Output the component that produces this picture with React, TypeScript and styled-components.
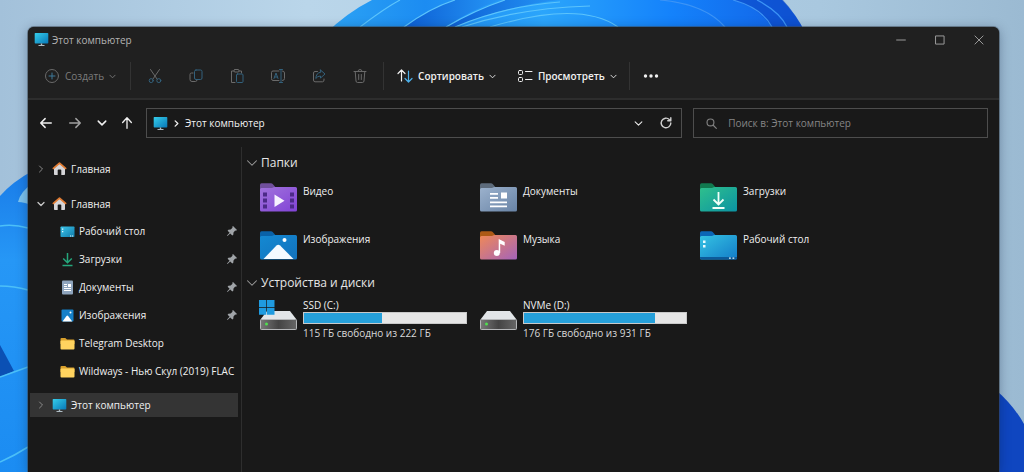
import React from "react";
import styled, { createGlobalStyle } from "styled-components";

const GlobalStyle = createGlobalStyle`
  *, *::before, *::after { box-sizing: border-box; }
  body {
    margin: 0;
    background: #a3c1da;
    color: #f0f0f0;
    font: 400 10px/16px "Open Sans", "Noto Sans", sans-serif;
  }
  button, input { font: inherit; color: inherit; }
  ul { list-style: none; margin: 0; padding: 0; }
  svg { flex: none; }
`;

/* ---------- shell ---------- */

const Desktop = styled.div`
  position: relative;
  display: flex;
  min-height: 100vh;
  padding: 27px 25px 0 28px;
  overflow: hidden;
`;

const WallpaperArt = styled.svg`
  position: absolute;
  inset: 0;
  width: 100%;
  height: 100%;
`;

const ExplorerWindow = styled.main`
  position: relative;
  flex: 1;
  min-width: 0;
  display: flex;
  flex-direction: column;
  background: #191919;
  border-radius: 6px 6px 0 0;
  box-shadow: 0 0 0 1px rgba(60, 70, 80, 0.5), 0 2px 12px rgba(0, 20, 50, 0.35);
`;

const TitleBar = styled.header`
  display: flex;
  align-items: center;
  height: 25px;
  padding-left: 6px;
  background: #202020;
  border-radius: 6px 6px 0 0;
`;

const Title = styled.h1`
  flex: 1;
  margin: 0 0 0 3px;
  font-size: 10px;
  font-weight: 400;
  color: #b4b4b4;
`;

const IconButton = styled.button<{ $w: number }>`
  display: flex;
  align-items: center;
  justify-content: center;
  flex: none;
  width: ${(p) => p.$w}px;
  height: 24px;
  padding: 0;
  border: 0;
  background: none;
  color: #f0f0f0;
`;

/* ---------- command bar ---------- */

const CommandBar = styled.div`
  display: flex;
  align-items: center;
  height: 48px;
  padding: 2px 0 0 16px;
  background: #202020;
  border-bottom: 2px solid #2d2d2d;
`;

const Command = styled.button<{ $muted?: boolean }>`
  display: flex;
  align-items: center;
  gap: 5px;
  flex: none;
  padding: 0;
  border: 0;
  background: none;
  white-space: nowrap;
  font-weight: ${(p) => (p.$muted ? 500 : 600)};
  color: ${(p) => (p.$muted ? "#7c7c7c" : "#f0f0f0")};
`;

const CommandGroup = styled.div<{ $gap?: number }>`
  display: flex;
  align-items: center;
  gap: ${(p) => p.$gap ?? 0}px;
`;

const Separator = styled.span<{ $left: number; $right: number }>`
  flex: none;
  width: 1px;
  height: 28px;
  margin: 0 ${(p) => p.$right}px 0 ${(p) => p.$left}px;
  background: #333333;
`;

/* ---------- address row ---------- */

const AddressRow = styled.div`
  display: flex;
  align-items: center;
  padding: 8px 11px 9px 4px;
`;

const Fields = styled.div`
  flex: 1;
  min-width: 0;
  display: grid;
  grid-template-columns: minmax(0, 20fr) minmax(0, 11fr);
  gap: 11px;
  margin-left: 6px;
`;

const AddressBox = styled.nav`
  display: flex;
  align-items: center;
  height: 30px;
  padding: 0 1px 0 6px;
  border: 1px solid #4d4d4d;
`;

const Crumb = styled.a`
  flex: 1;
  color: #f2f2f2;
  font-weight: 500;
  text-decoration: none;
  white-space: nowrap;
`;

const SearchBox = styled.label`
  display: flex;
  align-items: center;
  gap: 11px;
  height: 30px;
  padding: 0 12px;
  border: 1px solid #4d4d4d;
  color: #808080;
`;

const SearchInput = styled.input`
  flex: 1;
  min-width: 0;
  padding: 0;
  border: 0;
  outline: 0;
  background: none;
  &::placeholder { color: #858585; opacity: 1; }
`;

/* ---------- body ---------- */

const Body = styled.div`
  flex: 1;
  display: grid;
  grid-template-columns: 214px minmax(0, 1fr);
`;

const Sidebar = styled.nav`
  padding: 8px 3px 0 2px;
  border-right: 1px solid #2e2e2e;
`;

const SideGroup = styled.ul`
  margin-bottom: 8px;
`;

const SideRow = styled.li<{ $selected?: boolean; $nested?: boolean }>`
  display: flex;
  align-items: center;
  height: ${(p) => (p.$selected ? 24 : p.$nested ? 28 : 27)}px;
  padding-left: ${(p) => (p.$nested ? 30 : 0)}px;
  padding-right: 1px;
  background: ${(p) => (p.$selected ? "#343434" : "transparent")};
`;

const SideLink = styled.a`
  flex: 1;
  min-width: 0;
  display: flex;
  align-items: center;
  gap: 4px;
  color: #f0f0f0;
  text-decoration: none;
  white-space: nowrap;
`;

const Content = styled.section`
  padding: 6px 4px 0;
`;

const SectionHeading = styled.h2`
  display: flex;
  align-items: center;
  gap: 3px;
  margin: 0;
  height: 20px;
  font-size: 12px;
  line-height: 20px;
  font-weight: 400;
  color: #e6e6e6;
`;

const TileGrid = styled.ul<{ $top: number }>`
  display: grid;
  grid-template-columns: repeat(auto-fill, minmax(200px, 220px));
  row-gap: 18px;
  padding: ${(p) => p.$top}px 0 12px 14px;
`;

const FolderTile = styled.a`
  display: flex;
  gap: 6px;
  height: 30px;
  color: #f0f0f0;
  text-decoration: none;
`;

const DriveTile = styled(FolderTile)`
  height: 42px;
`;

const DriveInfo = styled.div`
  width: 164px;
`;

const DriveLine = styled.div<{ $dim?: boolean }>`
  height: ${(p) => (p.$dim ? 16 : 15)}px;
  color: ${(p) => (p.$dim ? "#d8d8d8" : "#f0f0f0")};
`;

const UsageTrack = styled.div`
  height: 12px;
  margin-bottom: 1px;
  border: 1px solid #c9c9c9;
  background: #e6e6e6;
`;

const UsageFill = styled.div`
  height: 100%;
  background: #26a0da;
`;

/* ---------- small line icons ---------- */

type LineProps = { size?: number; color?: string; w?: number; children: React.ReactNode };
const Line = ({ size = 16, color = "currentColor", w = 1, children }: LineProps) => (
  <svg width={size} height={size} viewBox="0 0 16 16" fill="none" stroke={color} strokeWidth={w}
    strokeLinecap="round" strokeLinejoin="round" aria-hidden="true">
    {children}
  </svg>
);

const GREY = "#6a6a6a";
const BLUE = "#33617c";

const Chevron = ({ dir = "down", size = 8, w = 2, color }: { dir?: "down" | "right"; size?: number; w?: number; color?: string }) => (
  <Line size={size} w={w} color={color}>
    {dir === "down" ? <path d="M2 5l6 6 6-6" /> : <path d="M5 2l6 6-6 6" />}
  </Line>
);

const PlusIcon = () => (
  <Line color={GREY}><circle cx="8" cy="8" r="6.5" /><path d="M8 5v6M5 8h6" stroke="#3f7898" /></Line>
);
const CutIcon = () => (
  <Line color={GREY}>
    <path d="M3.5 1.5l6.6 9.6M12.5 1.5L5.9 11.1" />
    <circle cx="4.2" cy="12.6" r="2" stroke={BLUE} /><circle cx="11.8" cy="12.6" r="2" stroke={BLUE} />
  </Line>
);
const CopyIcon = () => (
  <Line color={GREY}>
    <path d="M5 5H3.5Q2 5 2 6.5v5Q2 13.5 4 13.5h3.5Q9 13.5 9 12" />
    <rect x="6.5" y="2" width="7.5" height="9.5" rx="1.5" stroke={BLUE} />
  </Line>
);
const PasteIcon = () => (
  <Line color={GREY}>
    <path d="M5 3H2.5v11.5H6M10 3h2.5v2" /><rect x="5" y="1.5" width="5" height="2.5" rx="1" />
    <rect x="7.5" y="6" width="6.5" height="8.5" rx="1" stroke={BLUE} />
  </Line>
);
const RenameIcon = () => (
  <Line color={GREY}>
    <path d="M9 3H3Q1.5 3 1.5 4.5v6Q1.5 12.500 3 12.500h6M12.500 3q2 0 2 2v5.500q0 2-2 2" />
    <path d="M4 10.500L6 5l2 5.500M4.700 9h2.600" stroke={BLUE} /><path d="M9.500 1.500h3M11 1.500v13M9.500 14.500h3" stroke={BLUE} />
  </Line>
);
const ShareIcon = () => (
  <Line color={GREY}>
    <path d="M6.500 3.500H4Q2.500 3.500 2.500 5v7q0 1.800 1.500 1.800h7.500q1.500 0 1.500-1.800v-1" />
    <path d="M9.500 2l4.500 4-4.500 4V8Q6.500 8 4.800 10.500 5 5 9.500 4.200z" stroke={BLUE} />
  </Line>
);
const TrashIcon = () => (
  <Line color={GREY}><path d="M2 3.500h12M6 3.500q0-2 2-2t2 2M3.200 3.500l.8 9.500q.2 1.500 1.500 1.500h5q1.300 0 1.500-1.500l.8-9.500M6.700 6.500v5M9.300 6.500v5" /></Line>
);
const SortIcon = () => (
  <Line w={1.2}><path d="M4.500 13V2M1 5.500L4.500 2 8 5.500" /><path d="M11.500 3v11M8 10.500l3.500 3.500 3.500-3.500" stroke="#4cb0ea" /></Line>
);
const ViewIcon = () => (
  <Line><rect x="1.500" y="2.500" width="4" height="4" rx="1" /><rect x="1.500" y="9.500" width="4" height="4" rx="1" /><path d="M8.500 3.500H15M8.500 11.500H15" /></Line>
);
const MoreIcon = () => (
  <svg width="16" height="16" viewBox="0 0 16 16" fill="currentColor" aria-hidden="true">
    <circle cx="2.500" cy="8" r="1.700" /><circle cx="8" cy="8" r="1.700" /><circle cx="13.500" cy="8" r="1.700" />
  </svg>
);

const PinIcon = () => (
  <svg width="10" height="10" viewBox="0 0 10 10" aria-hidden="true">
    <path d="M6 0l4 4-1 .7-.8-.1-1.700 1.900-.2 2.300-1 .7L3.200 7.400.5 10 0 9.500l2.600-2.700L.6 4.700l.8-1 2.300-.2L5.500 1.800 5.300.8z" fill="#a0a4a8" />
  </svg>
);

/* ---------- coloured icons ---------- */

const Gradient = ({ id, from, to }: { id: string; from: string; to: string }) => (
  <linearGradient id={id} x1="0" y1="0" x2="1" y2="1"><stop stopColor={from} /><stop offset="1" stopColor={to} /></linearGradient>
);

const PcIcon = () => {
  const id = React.useId();
  return (
    <svg width="15" height="15" viewBox="0 0 15 15" aria-hidden="true">
      <defs><Gradient id={id} from="#35cdea" to="#0878b8" /></defs>
      <rect x=".7" y="1" width="13.600" height="10.500" rx=".7" fill={`url(#${id})`} />
      <path d="M6.800 11.500h1.400v1.500h2.300v.9h-6V13h2.300z" fill="#aebcc4" />
    </svg>
  );
};
const HomeIcon = () => (
  <svg width="15" height="15" viewBox="0 0 15 15" aria-hidden="true">
    <path d="M2 6.500L7.500 2 13 6.500v6.700q0 .8-.8.8H9.300V9.300q0-.8-.8-.8h-2q-.8 0-.8.8V14H2.800q-.8 0-.8-.8z" fill="#d5d5d8" />
    <path d="M1.400 7.400L7.500 2.100l6.100 5.300" fill="none" stroke="#e07b32" strokeWidth="1.800" strokeLinecap="round" strokeLinejoin="round" />
  </svg>
);
const DesktopIcon = () => {
  const id = React.useId();
  return (
    <svg width="15" height="15" viewBox="0 0 15 15" aria-hidden="true">
      <defs><Gradient id={id} from="#3cc4ea" to="#107cab" /></defs>
      <rect x=".5" y="2.500" width="14" height="10.500" rx=".8" fill={`url(#${id})`} />
      <path d="M2 4.500h1.300v1.300H2zM2 7h1.300v1.300H2zM10 11.500h1.200v1H10zM12 11.500h1.200v1H12z" fill="#e7faff" />
    </svg>
  );
};
const DownloadIcon = () => (
  <svg width="15" height="15" viewBox="0 0 15 15" fill="none" stroke="#25a77c" strokeWidth="1.500" aria-hidden="true">
    <path d="M7.500 1v9.500M3.200 6.500l4.300 4.200 4.300-4.200M2.500 13.500h10" />
  </svg>
);
const DocumentIcon = () => (
  <svg width="15" height="15" viewBox="0 0 15 15" aria-hidden="true">
    <rect x="2" y=".5" width="11" height="14" rx="1" fill="#8fa5be" />
    <path d="M4 4h3v1H4zM4 6h3v1H4zM8 4h3v3H8zM4 8h7v1H4zM4 10h7v1H4z" fill="#fff" />
  </svg>
);
const PictureIcon = () => (
  <svg width="15" height="15" viewBox="0 0 15 15" aria-hidden="true">
    <rect x="1.500" y="1.500" width="12" height="12" rx="1" fill="#1580c8" />
    <path d="M2.500 13.500l4-5.500q.8-.8 1.600 0l4.200 5.500z" fill="#fff" /><circle cx="10.500" cy="4.500" r="1" fill="#fff" />
  </svg>
);
const YellowFolder = () => (
  <svg width="15" height="15" viewBox="0 0 15 15" aria-hidden="true">
    <path d="M.5 3q0-1 1-1h3.800l1.700 1.500h6.500q1 0 1 1V8H.5z" fill="#d9a02c" />
    <rect x=".5" y="4.500" width="14" height="9" rx="1" fill="#ffd35f" />
  </svg>
);

type FolderKind = "video" | "documents" | "downloads" | "pictures" | "music" | "desktop";
const folderPalette: Record<FolderKind, [string, string, string]> = {
  video: ["#704f9c", "#a173dc", "#8143d6"],
  documents: ["#5d6b7b", "#9cb2cd", "#6883a5"],
  downloads: ["#11794f", "#2fc08c", "#0b93a3"],
  pictures: ["#0a62a8", "#1489d2", "#1272bd"],
  music: ["#ad5a16", "#f08957", "#a463ba"],
  desktop: ["#0b66b6", "#35c3e3", "#137cc8"],
};

const FolderGlyph = ({ kind }: { kind: FolderKind }) => {
  switch (kind) {
    case "video":
      return (<>
        <path d="M14.500 11.500v12.500l10-6.200z" fill="#f7f2ff" />
        <path d="M3 9.500h4v4H3zM3 15.500h4v4H3zM3 21.500h4v4H3zM30 9.500h4v4h-4zM30 15.500h4v4h-4zM30 21.500h4v4h-4z" fill="#4c2a88" />
      </>);
    case "documents":
      return <path d="M10 10h8v1.800h-8zM10 14h8v1.800h-8zM21 9.500h6v6h-6zM10 18.500h17v1.800H10zM10 22.500h17v1.800H10z" fill="#fff" />;
    case "downloads":
      return <path d="M18.500 9v12M13.500 16.500l5 5 5-5M12.500 25h12" fill="none" stroke="#f0fff8" strokeWidth="1.800" />;
    case "pictures":
      return (<><path d="M3.500 28L16.500 14.500q1.800-1.500 3.600 0L33.500 28z" fill="#f5faff" /><circle cx="24.500" cy="9" r="2" fill="#fff" /></>);
    case "music":
      return (<><circle cx="16.800" cy="22" r="3" fill="#fff" /><path d="M18.700 22V8l6 3v3.800l-4.500-2V22z" fill="#fff" /></>);
    case "desktop":
      return (<>
        <path d="M0 26h37v1q0 1.500-1.500 1.500h-34Q0 28.500 0 27z" fill="#0c5a99" />
        <path d="M3 9.500h2.500V12H3zM3 14h2.500v2.500H3zM29 26.500h1.800v1.300H29zM32.500 26.500h1.800v1.300h-1.800z" fill="#e8fbff" />
      </>);
  }
};

const FolderIcon = ({ kind }: { kind: FolderKind }) => {
  const id = React.useId();
  const [tab, from, to] = folderPalette[kind];
  return (
    <svg width="37" height="30" viewBox="0 0 37 30" aria-hidden="true">
      <defs><Gradient id={id} from={from} to={to} /></defs>
      <path d="M0 1.800Q0 .3 1.500.3H11q1 0 1.700.7l2.800 3.200V10H0z" fill={tab} />
      <path d="M0 6.500Q0 5 1.500 5H11q1.200 0 2-.5.700-.5 1.700-.5h20.800Q37 4 37 5.500V27q0 1.500-1.500 1.500h-34Q0 28.500 0 27z" fill={`url(#${id})`} />
      <FolderGlyph kind={kind} />
    </svg>
  );
};

const DriveIcon = ({ system }: { system?: boolean }) => {
  const id = React.useId();
  return (
    <svg width="37" height="34" viewBox="0 0 37 34" overflow="visible" aria-hidden="true">
      <defs><linearGradient id={id} x1="0" x2="1"><stop stopColor="#777" /><stop offset=".5" stopColor="#444" /><stop offset="1" stopColor="#666" /></linearGradient></defs>
      <path d="M7 14h23l6.500 8.500H.5z" fill="#e2e5e8" />
      <rect x=".5" y="22.500" width="36" height="10" rx=".8" fill={`url(#${id})`} stroke="#b5b7b9" />
      <circle cx="6.500" cy="27" r="1.500" fill="#4fe04f" />
      {system && <path d="M-1 3h7.300v7H-1zM7 3h7.500v7H7zM-1 10.700h7.300v7H-1zM7 10.700h7.500v7H7z" fill="#1f9be0" />}
    </svg>
  );
};

/* ---------- wallpaper ---------- */

const Wallpaper = () => (
  <WallpaperArt viewBox="0 0 1024 472" preserveAspectRatio="none" aria-hidden="true">
    <defs>
      <linearGradient id="sky" x1="0" x2="1"><stop stopColor="#a3c1da" /><stop offset=".3" stopColor="#bad6ea" /><stop offset=".8" stopColor="#a9c8df" /><stop offset="1" stopColor="#9bbad2" /></linearGradient>
      <linearGradient id="bloom" gradientUnits="userSpaceOnUse" x1="330" y1="0" x2="805" y2="0"><stop stopColor="#2ba2f4" /><stop offset=".2" stopColor="#1c8cf2" /><stop offset=".45" stopColor="#2ba5fb" /><stop offset=".72" stopColor="#1482fb" /><stop offset="1" stopColor="#1260e4" /></linearGradient>
      <linearGradient id="fold" x1="0" x2="1"><stop stopColor="#0d5fd4" /><stop offset="1" stopColor="#2596f6" /></linearGradient>
      <linearGradient id="petal" x1="0" x2="0" y1="0" y2="1"><stop stopColor="#1a7ce8" /><stop offset=".3" stopColor="#2697f6" /><stop offset="1" stopColor="#1b8cf2" /></linearGradient>
    </defs>
    <rect width="1024" height="472" fill="url(#sky)" />
    <path d="M325 34Q348 12 372 0H782Q796 14 806 34z" fill="url(#bloom)" />
    <path d="M404 27Q430 8 455 0H500Q470 10 446 27z" fill="url(#fold)" />
    <path d="M446 27Q475 10 505 0H560Q505 6 455 27z" fill="url(#fold)" />
    <path d="M733 0H783Q796 14 806 34H776Q762 8 733 0z" fill="#0c46c4" opacity=".6" />
    <g fill="none" stroke="#5cc4fc" strokeWidth="1.200">
      <path d="M360 27Q385 8 400 0M404 27Q430 8 455 0M446 27Q475 10 505 0M455 27Q505 6 560 2M462 27Q520 8 590 6M490 27Q580 0 618 27" />
      <path d="M660 0Q705 4 725 27M733 0Q762 8 772 27M757 0Q780 12 787 27" stroke="#3c94f6" />
    </g>
    <path d="M0 196Q12 182 34 170V472H0z" fill="url(#petal)" />
    <path d="M18 202Q20 192 34 182V206Q24 202 18 202z" fill="#7cc4f0" />
    <path d="M0 345Q6 356 14 371L0 377z" fill="#0b50b4" />
    <g fill="none" stroke="#4cc0f8" strokeWidth="1.500"><path d="M0 226Q14 224 28 228M0 286Q14 286 28 290M0 377Q14 372 28 367M0 462Q14 456 28 447" /></g>
    <path d="M996 390Q1014 406 1024 424V472H996z" fill="#0f46c0" />
  </WallpaperArt>
);

/* ---------- data ---------- */

const pinned = [
  { label: "Рабочий стол", icon: <DesktopIcon />, pin: true },
  { label: "Загрузки", icon: <DownloadIcon />, pin: true },
  { label: "Документы", icon: <DocumentIcon />, pin: true },
  { label: "Изображения", icon: <PictureIcon />, pin: true },
  { label: "Telegram Desktop", icon: <YellowFolder />, pin: false },
  { label: "Wildways - Нью Скул (2019) FLAC", icon: <YellowFolder />, pin: false },
];

const folders: { label: string; kind: FolderKind }[] = [
  { label: "Видео", kind: "video" },
  { label: "Документы", kind: "documents" },
  { label: "Загрузки", kind: "downloads" },
  { label: "Изображения", kind: "pictures" },
  { label: "Музыка", kind: "music" },
  { label: "Рабочий стол", kind: "desktop" },
];

const drives = [
  { label: "SSD (C:)", free: 115, total: 222, system: true },
  { label: "NVMe (D:)", free: 176, total: 931, system: false },
];

const fileActions = [
  { label: "Вырезать", icon: <CutIcon /> },
  { label: "Копировать", icon: <CopyIcon /> },
  { label: "Вставить", icon: <PasteIcon /> },
  { label: "Переименовать", icon: <RenameIcon /> },
  { label: "Поделиться", icon: <ShareIcon /> },
  { label: "Удалить", icon: <TrashIcon /> },
];

export default function App() {
  return (
    <>
      <GlobalStyle />
      <Desktop>
        <Wallpaper />
        <ExplorerWindow>
          <TitleBar>
            <PcIcon />
            <Title>Этот компьютер</Title>
            <IconButton $w={39} aria-label="Свернуть"><Line size={10} color="#999" w={1.6}><path d="M1 8h14" /></Line></IconButton>
            <IconButton $w={39} aria-label="Развернуть"><Line size={10} color="#999" w={1.6}><path d="M1.500 1.500h13v13h-13z" /></Line></IconButton>
            <IconButton $w={40} aria-label="Закрыть"><Line size={10} color="#999" w={1.6}><path d="M1.500 1.500l13 13M14.500 1.500l-13 13" /></Line></IconButton>
          </TitleBar>

          <CommandBar>
            <Command $muted><PlusIcon />Создать<Chevron size={7} /></Command>
            <Separator $left={14} $right={3} />
            <CommandGroup>
              {fileActions.map((a) => (
                <IconButton key={a.label} $w={41} aria-label={a.label}>{a.icon}</IconButton>
              ))}
            </CommandGroup>
            <Separator $left={3} $right={13} />
            <CommandGroup $gap={21}>
              <Command><SortIcon />Сортировать<Chevron size={7} /></Command>
              <Command><ViewIcon />Просмотреть<Chevron size={7} /></Command>
            </CommandGroup>
            <Separator $left={12} $right={9} />
            <IconButton $w={24} aria-label="Дополнительно"><MoreIcon /></IconButton>
          </CommandBar>

          <AddressRow>
            <IconButton $w={27} aria-label="Назад"><Line size={14} w={1.7}><path d="M14 8H2.500M7 3L2 8l5 5" /></Line></IconButton>
            <IconButton $w={32} aria-label="Вперёд"><Line size={14} w={1.7} color="#a0a0a0"><path d="M2 8h11.500M9 3l5 5-5 5" /></Line></IconButton>
            <IconButton $w={22} aria-label="Последние расположения"><Chevron size={10} w={2.400} /></IconButton>
            <IconButton $w={27} aria-label="Вверх"><Line size={14} w={1.500}><path d="M8 14V2.500M3 7.500L8 2l5 5.500" /></Line></IconButton>
            <Fields>
              <AddressBox aria-label="Адрес">
                <PcIcon />
                <IconButton $w={17} aria-label="Развернуть путь"><Chevron dir="right" size={7} w={3} /></IconButton>
                <Crumb href="#pc">Этот компьютер</Crumb>
                <IconButton $w={28} aria-label="Предыдущие расположения"><Chevron size={9} w={1.800} /></IconButton>
                <IconButton $w={28} aria-label="Обновить"><Line size={14} w={1.600} color="#d0d0d0"><path d="M13.500 8A5.500 5.500 0 1 1 11.800 4L13.500 5.500M13.500 2v3.500H10" /></Line></IconButton>
              </AddressBox>
              <SearchBox>
                <Line size={11} w={1.700}><circle cx="6.500" cy="6.500" r="5" /><path d="M10.500 10.500L15 15" /></Line>
                <SearchInput type="search" aria-label="Поиск" placeholder="Поиск в: Этот компьютер" />
              </SearchBox>
            </Fields>
          </AddressRow>

          <Body>
            <Sidebar aria-label="Область навигации">
              <SideGroup>
                <SideRow>
                  <IconButton $w={22} aria-label="Развернуть"><Chevron dir="right" color="#8a8a8a" /></IconButton>
                  <SideLink href="#home"><HomeIcon />Главная</SideLink>
                </SideRow>
              </SideGroup>
              <SideGroup>
                <SideRow>
                  <IconButton $w={22} aria-label="Свернуть"><Chevron color="#c8c8c8" w={2.600} /></IconButton>
                  <SideLink href="#quick"><HomeIcon />Главная</SideLink>
                </SideRow>
                {pinned.map((p) => (
                  <SideRow key={p.label} $nested>
                    <SideLink href="#folder">{p.icon}{p.label}</SideLink>
                    {p.pin && <PinIcon />}
                  </SideRow>
                ))}
              </SideGroup>
              <SideGroup>
                <SideRow $selected>
                  <IconButton $w={22} aria-label="Развернуть"><Chevron dir="right" color="#8a8a8a" /></IconButton>
                  <SideLink href="#pc" aria-current="page"><PcIcon />Этот компьютер</SideLink>
                </SideRow>
              </SideGroup>
            </Sidebar>

            <Content>
              <SectionHeading><Chevron size={12} w={1.400} color="#9a9a9a" />Папки</SectionHeading>
              <TileGrid $top={10}>
                {folders.map((f) => (
                  <li key={f.label}><FolderTile href="#folder"><FolderIcon kind={f.kind} />{f.label}</FolderTile></li>
                ))}
              </TileGrid>
              <SectionHeading><Chevron size={12} w={1.400} color="#9a9a9a" />Устройства и диски</SectionHeading>
              <TileGrid $top={4}>
                {drives.map((d) => {
                  const used = Math.round(((d.total - d.free) / d.total) * 100);
                  return (
                    <li key={d.label}>
                      <DriveTile href="#drive">
                        <DriveIcon system={d.system} />
                        <DriveInfo>
                          <DriveLine>{d.label}</DriveLine>
                          <UsageTrack role="progressbar" aria-label={d.label} aria-valuenow={used}>
                            <UsageFill style={{ width: `${used}%` }} />
                          </UsageTrack>
                          <DriveLine $dim>{d.free} ГБ свободно из {d.total} ГБ</DriveLine>
                        </DriveInfo>
                      </DriveTile>
                    </li>
                  );
                })}
              </TileGrid>
            </Content>
          </Body>
        </ExplorerWindow>
      </Desktop>
    </>
  );
}
